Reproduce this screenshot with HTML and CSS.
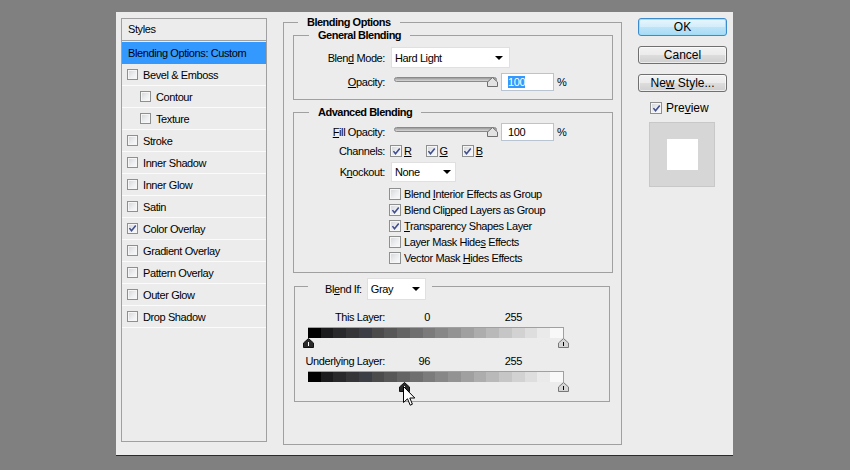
FILE: index.html
```html
<!DOCTYPE html>
<html>
<head>
<meta charset="utf-8">
<title>Layer Style</title>
<link rel="stylesheet" href="styles.css">
</head>
<body>
<div class="dialog">
  <aside class="styles-panel">
    <div class="sp-head">Styles</div>
    <div class="sp-row selected">Blending Options: Custom</div>
    <div class="sp-row"><span class="cb small"></span><span>Bevel &amp; Emboss</span></div>
    <div class="sp-row sub"><span class="cb small"></span><span>Contour</span></div>
    <div class="sp-row sub"><span class="cb small"></span><span>Texture</span></div>
    <div class="sp-row"><span class="cb small"></span><span>Stroke</span></div>
    <div class="sp-row"><span class="cb small"></span><span>Inner Shadow</span></div>
    <div class="sp-row"><span class="cb small"></span><span>Inner Glow</span></div>
    <div class="sp-row"><span class="cb small"></span><span>Satin</span></div>
    <div class="sp-row"><span class="cb small checked"><svg class="tick" viewBox="0 0 10 10"><path d="M1.6 4.6 L3.9 7.6 L8.6 1.6"/></svg></span><span>Color Overlay</span></div>
    <div class="sp-row"><span class="cb small"></span><span>Gradient Overlay</span></div>
    <div class="sp-row"><span class="cb small"></span><span>Pattern Overlay</span></div>
    <div class="sp-row"><span class="cb small"></span><span>Outer Glow</span></div>
    <div class="sp-row"><span class="cb small"></span><span>Drop Shadow</span></div>
  </aside>

  <fieldset class="main">
    <legend class="main-legend">Blending Options</legend>

    <fieldset class="group general">
      <legend class="group-legend">General Blending</legend>
      <div class="frow h21">
        <span class="flabel">Blen<u>d</u> Mode:</span>
        <div class="select sel-mode"><span>Hard Light</span><span class="caret"></span></div>
      </div>
      <div class="frow h18 mt5">
        <span class="flabel"><u>O</u>pacity:</span>
        <div class="slider">
          <div class="track"></div>
          <svg class="sthumb" style="left:96px" width="11" height="10" viewBox="0 0 11 10"><path d="M0.5 9.5 V5 L5.5 0.5 L10.5 5 V9.5 Z"/></svg>
        </div>
        <div class="num"><span class="hl">100</span></div>
        <span class="pct">%</span>
      </div>
    </fieldset>

    <fieldset class="group advanced">
      <legend class="group-legend">Advanced Blending</legend>
      <div class="frow h18">
        <span class="flabel"><u>F</u>ill Opacity:</span>
        <div class="slider">
          <div class="track"></div>
          <svg class="sthumb" style="left:96px" width="11" height="10" viewBox="0 0 11 10"><path d="M0.5 9.5 V5 L5.5 0.5 L10.5 5 V9.5 Z"/></svg>
        </div>
        <div class="num"><span>100</span></div>
        <span class="pct">%</span>
      </div>
      <div class="frow h14 mt3">
        <span class="flabel">Channels:</span>
        <div class="channels">
          <span class="chan"><span class="cb checked"><svg class="tick" viewBox="0 0 10 10"><path d="M1.6 4.6 L3.9 7.6 L8.6 1.6"/></svg></span><u>R</u></span>
          <span class="chan"><span class="cb checked"><svg class="tick" viewBox="0 0 10 10"><path d="M1.6 4.6 L3.9 7.6 L8.6 1.6"/></svg></span><u>G</u></span>
          <span class="chan"><span class="cb checked"><svg class="tick" viewBox="0 0 10 10"><path d="M1.6 4.6 L3.9 7.6 L8.6 1.6"/></svg></span><u>B</u></span>
        </div>
      </div>
      <div class="frow h20 mt4">
        <span class="flabel">K<u>n</u>ockout:</span>
        <div class="select sel-knock"><span>None</span><span class="caret"></span></div>
      </div>
      <div class="checks">
        <div class="chk-row"><span class="cb"></span><span>Blend <u>I</u>nterior Effects as Group</span></div>
        <div class="chk-row"><span class="cb checked"><svg class="tick" viewBox="0 0 10 10"><path d="M1.6 4.6 L3.9 7.6 L8.6 1.6"/></svg></span><span>Blend Cli<u>p</u>ped Layers as Group</span></div>
        <div class="chk-row"><span class="cb checked"><svg class="tick" viewBox="0 0 10 10"><path d="M1.6 4.6 L3.9 7.6 L8.6 1.6"/></svg></span><span><u>T</u>ransparency Shapes Layer</span></div>
        <div class="chk-row"><span class="cb"></span><span>Layer Mask Hide<u>s</u> Effects</span></div>
        <div class="chk-row"><span class="cb"></span><span>Vector Mask <u>H</u>ides Effects</span></div>
      </div>
    </fieldset>

    <fieldset class="group blendif">
      <legend class="bi-legend">
        <span class="bi-label">Bl<u>e</u>nd If:</span>
        <div class="select sel-gray"><span>Gray</span><span class="caret"></span></div>
      </legend>
      <div class="lrow first">
        <span class="lname">This Layer:</span>
        <span class="lv1">0</span>
        <span class="lv2">255</span>
      </div>
      <div class="bar"></div>
      <div class="thumbs">
        <svg class="bthumb dark" style="left:-5px" width="11" height="10" viewBox="0 0 11 10"><path class="body" d="M0.5 9.5 V5 L5.5 0.5 L10.5 5 V9.5 Z"/><path class="mark" d="M5.5 4 V8"/></svg>
        <svg class="bthumb light" style="left:250px" width="11" height="10" viewBox="0 0 11 10"><path class="body" d="M0.5 9.5 V5 L5.5 0.5 L10.5 5 V9.5 Z"/><path class="mark" d="M5.5 4 V8"/></svg>
      </div>
      <div class="lrow">
        <span class="lname">Underlying Layer:</span>
        <span class="lv1">96</span>
        <span class="lv2">255</span>
      </div>
      <div class="bar"></div>
      <div class="thumbs">
        <svg class="bthumb dark" style="left:91px" width="11" height="10" viewBox="0 0 11 10"><path class="body" d="M0.5 9.5 V5 L5.5 0.5 L10.5 5 V9.5 Z"/><path class="mark" d="M5.5 4 V8"/></svg>
        <svg class="bthumb light" style="left:250px" width="11" height="10" viewBox="0 0 11 10"><path class="body" d="M0.5 9.5 V5 L5.5 0.5 L10.5 5 V9.5 Z"/><path class="mark" d="M5.5 4 V8"/></svg>
        <svg class="cursor" width="13" height="21" viewBox="0 0 13 21"><path d="M0.5 0.5 V16.5 L4.5 12.8 L7.2 19.2 L9.4 18.2 L6.8 12 H11.8 Z"/></svg>
      </div>
    </fieldset>
  </fieldset>

  <div class="side">
    <button class="btn default"><span>OK</span></button>
    <button class="btn"><span>Cancel</span></button>
    <button class="btn"><span>Ne<u>w</u> Style...</span></button>
    <div class="preview-row"><span class="cb checked"><svg class="tick" viewBox="0 0 10 10"><path d="M1.6 4.6 L3.9 7.6 L8.6 1.6"/></svg></span><span>Pre<u>v</u>iew</span></div>
    <div class="preview-box"><div class="swatch"></div></div>
  </div>
</div>
</body>
</html>
```

FILE: styles.css
```css
html, body {
  margin: 0;
  padding: 0;
}
body {
  background: #808080;
  font-family: "Liberation Sans", Arial, sans-serif;
  font-size: 11px;
  letter-spacing: -0.4px;
  color: #000;
  width: 850px;
  height: 470px;
  overflow: hidden;
}
u { text-decoration: underline; text-underline-offset: 1px; }

.dialog {
  margin: 12px 0 0 116px;
  width: 617px;
  height: 444px;
  box-sizing: border-box;
  background: #ececec;
  border-bottom: 1px solid #2b2b2b;
  padding: 6px 0 0 5px;
  display: flex;
  align-items: flex-start;
}

/* ---------- styles list ---------- */
.styles-panel {
  width: 146px;
  height: 424px;
  box-sizing: border-box;
  border: 1px solid #a0a0a0;
  flex: none;
}
.sp-head {
  height: 21px;
  line-height: 21px;
  padding-left: 6px;
  border-bottom: 1px solid #a0a0a0;
  margin-bottom: 1px;
}
.sp-row {
  height: 21px;
  border-bottom: 1px solid #fbfbfb;
  display: flex;
  align-items: center;
  gap: 5px;
  padding-left: 5px;
}
.sp-row.selected {
  background: #3399ff;
  padding-left: 6px;
  border-bottom-color: #3399ff;
}
.sp-row.sub { padding-left: 18px; }

/* ---------- checkbox ---------- */
.cb {
  width: 12px;
  height: 12px;
  box-sizing: border-box;
  border: 1px solid #8e8f8f;
  background: linear-gradient(135deg, #d2d4d8 0%, #eceef0 55%, #fbfbfb 100%);
  box-shadow: inset 0 0 0 1px #f6f6f6;
  flex: none;
  display: inline-flex;
  align-items: center;
  justify-content: center;
}
.cb.small { width: 11px; height: 11px; }
.tick {
  width: 9px;
  height: 9px;
  fill: none;
  stroke: #3f4d8e;
  stroke-width: 1.7;
}

/* ---------- fieldsets ---------- */
fieldset {
  margin: 0;
  padding: 0;
  min-width: 0;
  border: 1px solid #a0a0a0;
}
.main {
  margin: -3px 0 0 16px;
  width: 339px;
  height: 430px;
  box-sizing: border-box;
  flex: none;
}
.main-legend {
  margin-left: 14px;
  padding: 0 9px;
  font-weight: bold;
  line-height: 14px;
  letter-spacing: -0.5px;
}
.group-legend {
  margin-left: 15px;
  padding: 0 9px;
  font-weight: bold;
  line-height: 14px;
  letter-spacing: -0.5px;
}
.general {
  margin: -1px 8px 0 9px;
  padding: 5px 0 8px 0;
}
.advanced {
  margin: 5px 8px 0 9px;
  padding: 4px 0 6px 0;
}
.blendif {
  margin: 5px 11px 0 10px;
  padding: 0 0 9px 0;
}

/* ---------- form rows ---------- */
.frow {
  display: flex;
  align-items: center;
}
.h21 { height: 21px; }
.h20 { height: 20px; }
.h18 { height: 18px; }
.h14 { height: 14px; }
.mt3 { margin-top: 3px; }
.mt4 { margin-top: 4px; }
.mt5 { margin-top: 5px; }
.flabel {
  width: 91px;
  margin-right: 6px;
  text-align: right;
  flex: none;
}

.select {
  background: #fff;
  border: 1px solid #e0e0e0;
  box-sizing: border-box;
  display: flex;
  align-items: center;
  justify-content: space-between;
  padding-left: 3px;
  flex: none;
}
.caret {
  width: 0;
  height: 0;
  border-left: 4px solid transparent;
  border-right: 4px solid transparent;
  border-top: 4px solid #000;
}
.sel-mode { width: 119px; height: 21px; }
.sel-mode .caret { margin-right: 6px; }
.sel-knock { width: 65px; height: 20px; }
.sel-knock .caret { margin-right: 4px; }
.sel-gray { width: 59px; height: 22px; }
.sel-gray .caret { margin-right: 5px; }

.slider {
  position: relative;
  width: 108px;
  height: 18px;
  margin-right: 2px;
  flex: none;
}
.track {
  margin: 4px 0 0 3px;
  width: 103px;
  height: 5px;
  box-sizing: border-box;
  border: 1px solid #8a8a8a;
  border-radius: 3px;
  background: linear-gradient(#9c9c9c, #d8d8d8);
}
.sthumb {
  position: absolute;
  top: 4px;
}
.sthumb path {
  fill: #e2e2e2;
  stroke: #6e6e6e;
}

.num {
  width: 53px;
  height: 18px;
  box-sizing: border-box;
  border: 1px solid #b9c4d2;
  background: #fff;
  padding-left: 6px;
  display: flex;
  align-items: center;
  flex: none;
}
.hl {
  background: #3399ff;
  color: #fff;
}
.pct { margin-left: 3px; }

.channels {
  display: flex;
  align-items: center;
  margin-left: -1px;
}
.chan {
  display: flex;
  align-items: center;
  gap: 2px;
  margin-right: 14px;
}

.checks {
  margin-top: 4px;
  padding-left: 95px;
  display: flex;
  flex-direction: column;
}
.chk-row {
  height: 16px;
  display: flex;
  align-items: center;
  gap: 3px;
}

/* ---------- blend if ---------- */
.bi-legend {
  margin-left: 13px;
  padding: 0 6px 0 17px;
  height: 16px;
  display: flex;
  align-items: flex-start;
  gap: 5px;
}
.bi-label { line-height: 22px; }

.lrow {
  display: flex;
  align-items: center;
  height: 14px;
  margin-top: 6px;
}
.lrow.first { margin-top: 16px; }
.lname { width: 90px; text-align: right; flex: none; }
.lv1 { width: 45px; text-align: right; flex: none; }
.lv2 { width: 92px; text-align: right; flex: none; }

.bar {
  margin: 3px 0 0 13px;
  width: 256px;
  height: 11px;
  box-sizing: border-box;
  border-top: 1px solid #a0a0a0;
  border-right: 1px solid #a0a0a0;
  background: linear-gradient(to right,
    #000 0 5%, #1b1b1d 5% 10%, #29292b 10% 15%, #353537 15% 20%,
    #3c3e46 20% 25%, #4b4b4c 25% 30%, #575757 30% 35%, #646464 35% 40%,
    #6f6f6f 40% 45%, #7b7b7b 45% 50%, #878787 50% 55%, #939393 55% 60%,
    #a0a0a0 60% 65%, #adadad 65% 70%, #b9b9b9 70% 75%, #c6c6c6 75% 80%,
    #d2d2d2 80% 85%, #dedede 85% 90%, #eaeaea 90% 95%, #f8f8f8 95% 100%);
}
.thumbs {
  position: relative;
  margin-left: 13px;
  width: 256px;
  height: 10px;
}
.bthumb {
  position: absolute;
  top: 0;
}
.bthumb.dark .body { fill: #2a2a2a; stroke: #111; }
.bthumb.dark .mark { stroke: #fff; }
.bthumb.light .body { fill: #d6d6d6; stroke: #777; }
.bthumb.light .mark { stroke: #000; }
.cursor {
  position: absolute;
  left: 95px;
  top: 4px;
}
.cursor path {
  fill: #fff;
  stroke: #000;
  stroke-linejoin: miter;
}

/* ---------- right column ---------- */
.side {
  margin-left: 16px;
  width: 89px;
  display: flex;
  flex-direction: column;
  flex: none;
}
.btn {
  height: 18px;
  margin: 0 0 10px 0;
  padding: 0;
  box-sizing: border-box;
  border: 1px solid #707070;
  border-radius: 3px;
  background: linear-gradient(#f2f2f2 0%, #ebebeb 50%, #dddddd 51%, #cfcfcf 100%);
  box-shadow: inset 0 0 0 1px rgba(255,255,255,0.6);
  font-family: "Liberation Sans", Arial, sans-serif;
  font-size: 12px;
  letter-spacing: 0;
  color: #000;
  display: flex;
  align-items: center;
  justify-content: center;
}
.btn.default {
  border-color: #3c8ccb;
  background: linear-gradient(#e8f6fd 0%, #d2edfb 50%, #bde4f8 51%, #a9dbf6 100%);
  box-shadow: inset 0 0 0 1px #9edcf8;
}
.preview-row {
  margin: -1px 0 0 12px;
  height: 14px;
  display: flex;
  align-items: center;
  gap: 4px;
  font-size: 12px;
  letter-spacing: 0;
}
.preview-box {
  margin: 7px 0 0 11px;
  width: 66px;
  height: 65px;
  box-sizing: border-box;
  background: #d6d6d6;
  border: 1px solid #c8c8c8;
  display: flex;
  align-items: center;
  justify-content: center;
}
.swatch {
  width: 31px;
  height: 31px;
  background: #fff;
}
```
